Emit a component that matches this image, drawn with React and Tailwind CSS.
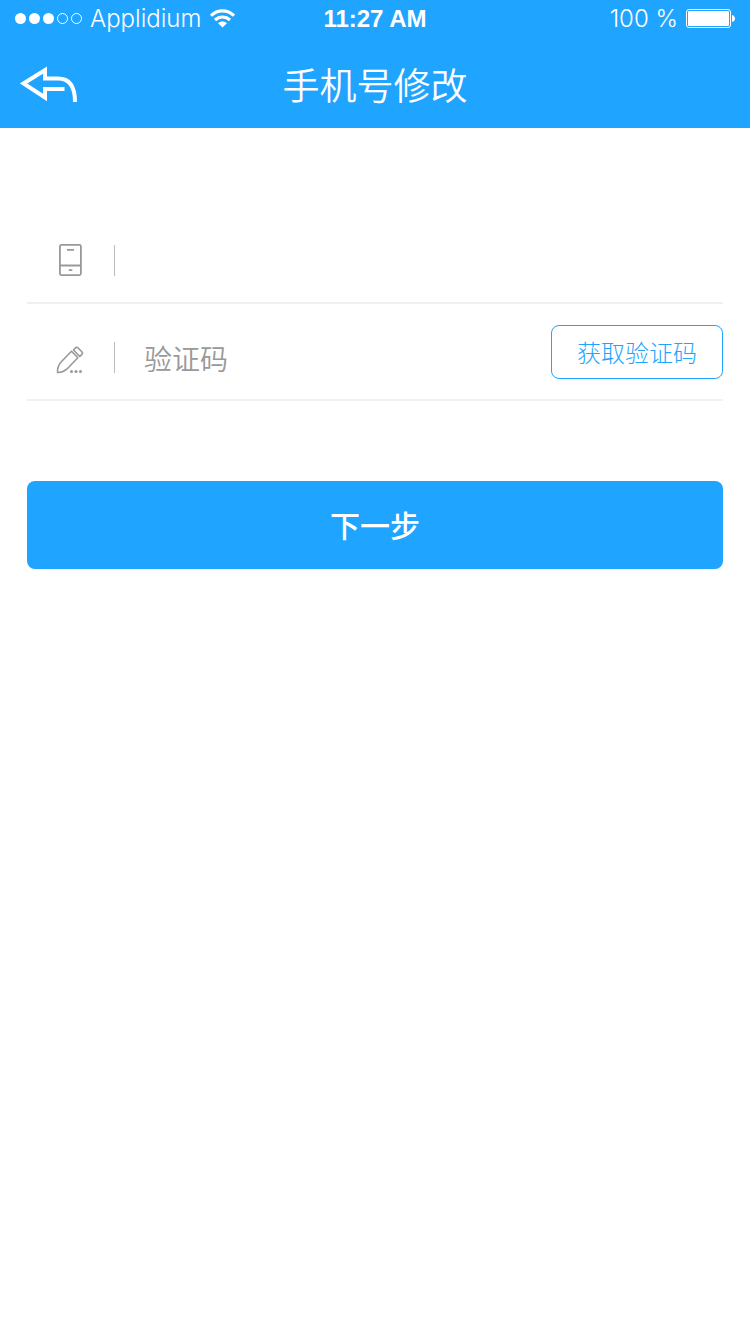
import React from 'react';

function StatusBar() {
  return (
    <div className="grid h-10 grid-cols-3 items-center px-[15px] pb-[3px] font-['Liberation_Sans','Noto_Sans_CJK_SC',sans-serif] text-2xl leading-none">
      <div className="flex items-center">
        <svg className="h-3 w-[68px]" viewBox="0 0 68 12" fill="none" stroke="white" aria-hidden="true">
          <circle cx="5.5" cy="5.5" r="5.5" fill="white" stroke="none" />
          <circle cx="19.5" cy="5.5" r="5.5" fill="white" stroke="none" />
          <circle cx="33.5" cy="5.5" r="5.5" fill="white" stroke="none" />
          <circle cx="47.5" cy="5.5" r="5" />
          <circle cx="61.5" cy="5.5" r="5" />
        </svg>
        <span className="ml-[7px] font-['Inter','Liberation_Sans',sans-serif] font-light">Applidium</span>
        <svg className="ml-[9px] h-5 w-[25px] shrink-0" viewBox="0 0 25 20" fill="none" stroke="white" strokeWidth="3.2" aria-hidden="true">
          <path d="M1 6.7C7.5.2 17.5.2 24 6.7" />
          <path d="M5 11c4.3-4 10.7-4 15 0" />
          <path d="M12.500 18.500L8 14.300c2.500-2.300 6.500-2.300 9 0z" fill="white" stroke="none" />
        </svg>
      </div>
      <span className="text-center font-bold">11:27 AM</span>
      <div className="flex items-center justify-end">
        <span className="font-['Inter','Liberation_Sans',sans-serif] font-light">100 %</span>
        <svg className="ml-2 h-[19px] w-[49px]" viewBox="0 0 49 19" fill="none" aria-hidden="true">
          <rect x="0.5" y="0.5" width="44" height="18" rx="2.5" stroke="white" />
          <rect x="2" y="2" width="41" height="15" rx="1" fill="white" />
          <path d="M46 6c4 1 4 6 0 7z" fill="white" />
        </svg>
      </div>
    </div>
  );
}

function BackIcon() {
  return (
    <svg className="h-[36px] w-[58px]" viewBox="0 0 58 36" fill="none" stroke="white" strokeWidth="4" aria-hidden="true">
      <path d="M44.500 23H25V31.500L3.500 17.500 25 4v8.500h13c11 0 17 7.500 17 23.500" />
    </svg>
  );
}

function PhoneIcon() {
  return (
    <svg className="h-[34px] w-7" viewBox="0 0 28 34" fill="none" stroke="#999" strokeWidth="1.8" aria-hidden="true">
      <rect x="3.900" y="0.900" width="21" height="30.200" rx="1.500" />
      <path d="M4 21.500h20.500M11 5.800h7M12.800 26.200h3.500" />
    </svg>
  );
}

function PencilIcon() {
  return (
    <svg className="h-[34px] w-7" viewBox="0 -5 28 34" fill="none" stroke="#999" strokeWidth="1.6" strokeLinejoin="round" aria-hidden="true">
      <path d="M15.500 5.200L4.800 16.200C2.500 19 1.300 22.800 1.600 26.500c3.500.2 6.500-1 9.200-3.300L21.800 11.700z" />
      <path d="M17.500 4l1.800-2c.9-.9 2-.9 2.900 0l3.600 3.700c.8.8.8 1.900 0 2.700l-2 2.100z" />
      <g fill="#999" stroke="none">
        <circle cx="15.500" cy="25.500" r="1.500" />
        <circle cx="20" cy="25.500" r="1.500" />
        <circle cx="24.500" cy="25.500" r="1.500" />
      </g>
    </svg>
  );
}

function Field({ id, label, icon, action, ...input }) {
  return (
    <div className="flex h-[97px] items-end border-b-2 border-[#efeff4] pb-5">
      <div className="flex min-w-0 flex-1 items-center pb-[6px] pl-[29px]">
        <label htmlFor={id} aria-label={label} className="flex h-[31px] items-center border-r border-[#bbb] pr-[30px]">
          {icon}
        </label>
        <input
          id={id}
          className="h-[31px] min-w-0 flex-1 bg-transparent pl-[29px] text-[28px] font-[350] text-[#333] outline-none placeholder:text-[#999] placeholder:opacity-100"
          {...input}
        />
      </div>
      {action}
    </div>
  );
}

export default function App() {
  return (
    <div className="min-h-screen bg-white font-['Noto_Sans_CJK_SC',sans-serif]">
      <header className="bg-[#1fa4ff] text-white">
        <StatusBar />
        <div className="grid h-[88px] grid-cols-[58px_1fr_58px] items-center px-5">
          <button type="button" aria-label="返回">
            <BackIcon />
          </button>
          <h1 className="text-center text-[37px] leading-none font-[350]">手机号修改</h1>
        </div>
      </header>
      <main className="px-[27px] pt-[79px]">
        <form onSubmit={(e) => e.preventDefault()}>
          <Field id="phone" label="手机号" type="tel" icon={<PhoneIcon />} />
          <Field
            id="code"
            label="验证码"
            type="text"
            placeholder="验证码"
            icon={<PencilIcon />}
            action={
              <button type="button" className="h-[54px] w-[172px] rounded-lg border border-[#1fa4ff] text-2xl font-light text-[#1fa4ff]">
                获取验证码
              </button>
            }
          />
          <button type="submit" className="mt-20 h-[88px] w-full rounded-lg bg-[#1fa4ff] pb-[2px] text-[30px] font-medium text-white">
            下一步
          </button>
        </form>
      </main>
    </div>
  );
}
